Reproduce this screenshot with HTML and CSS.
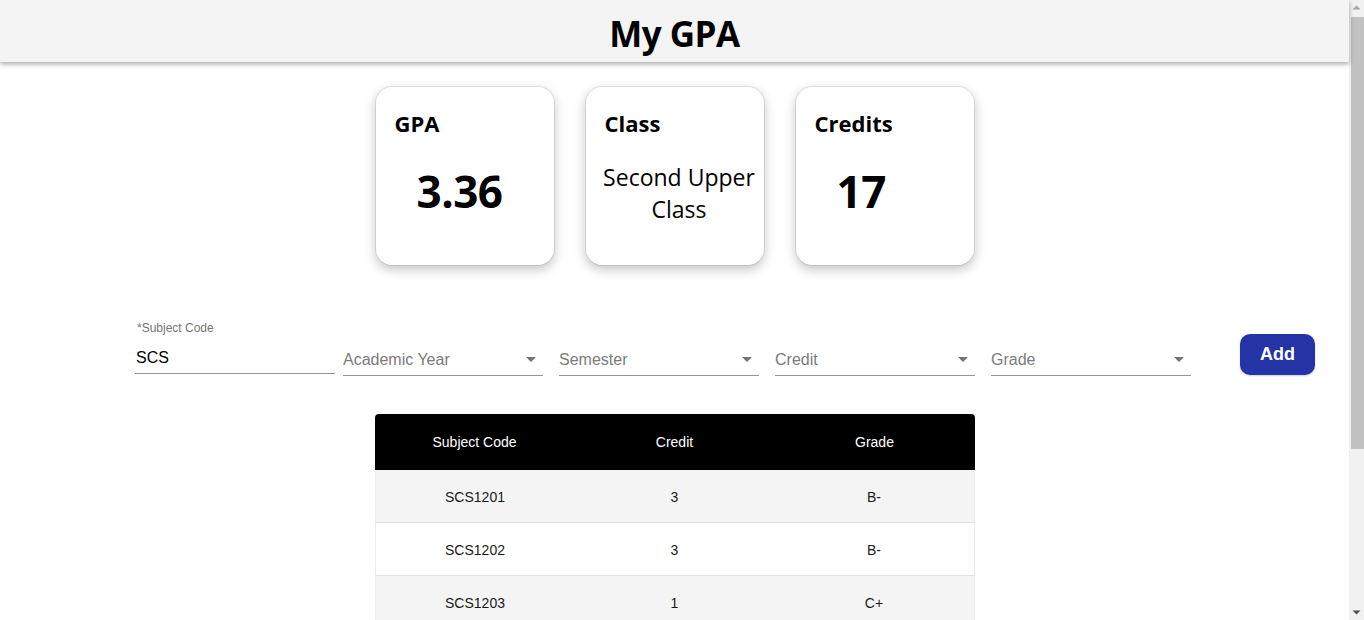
FILE: index.html
```html
<!DOCTYPE html>
<html lang="en">
<head>
<meta charset="utf-8">
<title>My GPA</title>
<link rel="stylesheet" href="styles.css">
</head>
<body>
<div class="page">
  <header class="topbar"><h1 class="title">My GPA</h1></header>

  <section class="cards">
    <div class="card">
      <h2 class="card-title">GPA</h2>
      <div class="card-value num">3.36</div>
    </div>
    <div class="card">
      <h2 class="card-title">Class</h2>
      <div class="card-value text">Second Upper Class</div>
    </div>
    <div class="card">
      <h2 class="card-title">Credits</h2>
      <div class="card-value num">17</div>
    </div>
  </section>

  <form class="entry">
    <div class="field text-field">
      <label class="field-label">*Subject Code</label>
      <div class="input">SCS</div>
    </div>
    <div class="field select">
      <span class="placeholder">Academic Year</span>
      <svg class="arrow" viewBox="0 0 24 24" width="24" height="24"><path d="M7 10l5 5 5-5z"/></svg>
    </div>
    <div class="field select">
      <span class="placeholder">Semester</span>
      <svg class="arrow" viewBox="0 0 24 24" width="24" height="24"><path d="M7 10l5 5 5-5z"/></svg>
    </div>
    <div class="field select">
      <span class="placeholder">Credit</span>
      <svg class="arrow" viewBox="0 0 24 24" width="24" height="24"><path d="M7 10l5 5 5-5z"/></svg>
    </div>
    <div class="field select">
      <span class="placeholder">Grade</span>
      <svg class="arrow" viewBox="0 0 24 24" width="24" height="24"><path d="M7 10l5 5 5-5z"/></svg>
    </div>
    <button type="button" class="add-btn">Add</button>
  </form>

  <table class="results">
    <thead>
      <tr><th>Subject Code</th><th>Credit</th><th>Grade</th></tr>
    </thead>
    <tbody>
      <tr><td>SCS1201</td><td>3</td><td>B-</td></tr>
      <tr><td>SCS1202</td><td>3</td><td>B-</td></tr>
      <tr><td>SCS1203</td><td>1</td><td>C+</td></tr>
    </tbody>
  </table>
</div>

<div class="scrollbar" aria-hidden="true">
  <div class="sb-btn"><svg width="15" height="17" viewBox="0 0 15 17"><path class="sb-up" d="M3.5 9.5h8l-4-4z"/></svg></div>
  <div class="sb-track"><div class="sb-thumb"></div></div>
  <div class="sb-btn"><svg width="15" height="17" viewBox="0 0 15 17"><path class="sb-down" d="M3.5 7.5h8l-4 4z"/></svg></div>
</div>
</body>
</html>
```

FILE: styles.css
```css
html, body {
  margin: 0;
  padding: 0;
  background: #ffffff;
}

body {
  font-family: "Liberation Sans", Arial, sans-serif;
  color: #000;
  display: flex;
  align-items: flex-start;
  height: 620px;
  overflow: hidden;
}

.page {
  flex: 1;
  min-width: 0;
}

/* fake classic scrollbar */
.scrollbar {
  width: 15px;
  height: 620px;
  flex-shrink: 0;
  background: #f1f1f1;
  display: flex;
  flex-direction: column;
}

.sb-btn {
  height: 17px;
  flex-shrink: 0;
}

.sb-btn svg {
  display: block;
}

.sb-up {
  fill: #a3a3a3;
}

.sb-down {
  fill: #505050;
}

.sb-track {
  flex: 1;
  padding-left: 2px;
}

.sb-thumb {
  height: 432px;
  background: #c1c1c1;
}

.topbar {
  background: #f4f4f4;
  height: 62px;
  display: flex;
  align-items: center;
  justify-content: center;
  box-shadow: 0 2px 5px rgba(0, 0, 0, 0.35);
  position: relative;
}

.title {
  margin: 0;
  font-family: "Open Sans", "Noto Sans", sans-serif;
  font-weight: 700;
  font-size: 35px;
  line-height: 1;
  letter-spacing: -0.5px;
  padding-top: 4px;
}

.cards {
  display: flex;
  justify-content: center;
  gap: 32px;
  margin-top: 25px;
}

.card {
  width: 178px;
  height: 178px;
  box-sizing: border-box;
  border-radius: 16px;
  background: #fff;
  box-shadow: 0 0 0 1px rgba(0, 0, 0, 0.08), 0 4px 12px rgba(0, 0, 0, 0.25);
  padding: 21px 0 22px 19px;
  display: flex;
  flex-direction: column;
  font-family: "Open Sans", "Noto Sans", sans-serif;
}

.card-title {
  margin: 0;
  font-size: 22px;
  font-weight: 700;
  line-height: 30px;
}

.card-value {
  flex: 1;
  display: flex;
  align-items: center;
}

.card-value.num {
  font-size: 44px;
  font-weight: 700;
  padding-left: 22px;
  letter-spacing: -0.5px;
}

.card-value.text {
  font-size: 23px;
  font-weight: 400;
  line-height: 32px;
  text-align: center;
  justify-content: center;
  margin-left: -10px;
  padding-top: 4px;
}

.entry {
  display: flex;
  align-items: flex-end;
  padding-left: 135px;
  margin-top: 56px;
}

.field {
  width: 200px;
  position: relative;
}

.field + .field {
  margin-left: 16px;
}

.text-field + .field {
  margin-left: 8px;
}

.text-field {
  margin-bottom: 2px;
}

.field-label {
  display: block;
  font-size: 12px;
  line-height: 14px;
  color: #757575;
  margin-left: 2px;
  margin-bottom: 7px;
}

.input {
  height: 23px;
  padding: 4px 0 4px 1px;
  font-size: 16px;
  line-height: 23px;
  color: #000;
  border-bottom: 1px solid #949494;
}

.select {
  height: 23px;
  padding: 6px 0 4px 0;
  border-bottom: 1px solid #949494;
  display: flex;
  align-items: center;
}

.placeholder {
  font-size: 16px;
  line-height: 23px;
  color: #7b7b7b;
}

.arrow {
  position: absolute;
  right: 0;
  top: 5px;
  fill: #757575;
}

.add-btn {
  margin-left: 49px;
  margin-bottom: 1px;
  width: 75px;
  height: 41px;
  border: none;
  border-radius: 10px;
  background: #2433a6;
  color: #fff;
  font-family: "Liberation Sans", Arial, sans-serif;
  font-weight: 700;
  font-size: 18px;
  box-shadow: 0 1px 2px rgba(0, 0, 0, 0.2);
}

.results {
  width: 600px;
  margin: 38px auto 45px;
  border-collapse: separate;
  border-spacing: 0;
  font-size: 14px;
  text-align: center;
}

.results th {
  background: #000;
  color: #fff;
  font-weight: 400;
  height: 56px;
  padding: 0;
  width: 200px;
}

.results th:first-child {
  border-top-left-radius: 4px;
}

.results th:last-child {
  border-top-right-radius: 4px;
}

.results td {
  height: 50px;
  padding: 2px 0 0;
  color: #1a1a1a;
  border-bottom: 1px solid #e0e0e0;
}

.results td:first-child {
  border-left: 1px solid #ececec;
}

.results td:last-child {
  border-right: 1px solid #ececec;
}

.results tbody tr:nth-child(odd) td {
  background: #f4f4f4;
}
```
